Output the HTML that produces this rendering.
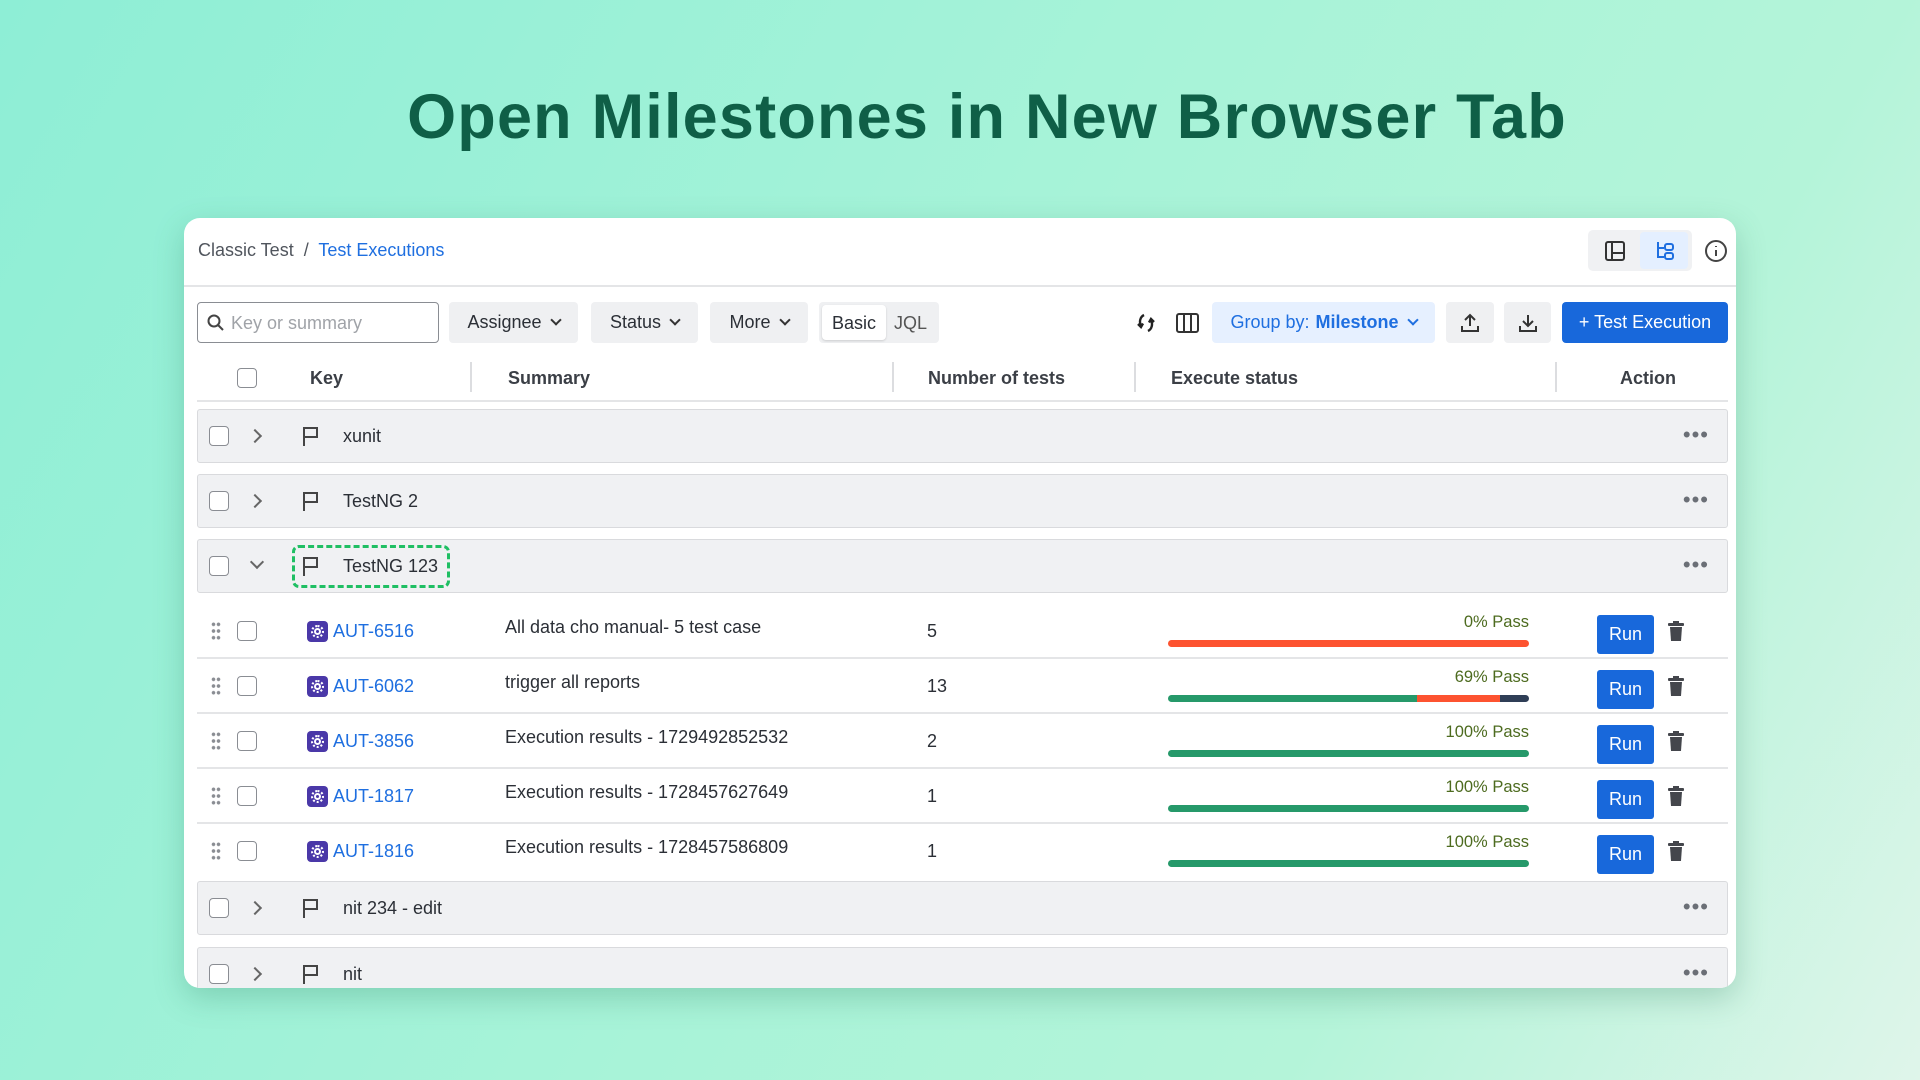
<!DOCTYPE html>
<html><head><meta charset="utf-8"><style>
*{box-sizing:border-box;margin:0;padding:0}
body{width:1920px;height:1080px;overflow:hidden;font-family:"Liberation Sans",sans-serif;background:linear-gradient(120deg,#8eeed6 0%,#a6f3d8 45%,#b4f4d9 75%,#dff5ea 100%);position:relative;color:#2b2f36}
h1{position:absolute;left:54px;right:0;top:81px;text-align:center;font-size:63px;font-weight:700;color:#0f5f47;letter-spacing:1.2px}
.card{position:absolute;left:184px;top:218px;width:1552px;height:770px;background:#fff;border-radius:16px;box-shadow:0 10px 30px rgba(30,110,80,.25);overflow:hidden}
.abs{position:absolute}
.bc{left:14px;top:22px;font-size:18px;color:#50555d}
.bc span{color:#1f6fe0}
.hdiv{left:0;right:0;top:67px;height:2px;background:#e4e5e7}
.btn{position:absolute;top:84px;height:41px;background:#eff0f2;border-radius:4px;font-size:18px;color:#2b2f36;display:flex;align-items:center;justify-content:center;gap:10px}
.chev{width:8px;height:8px;border-right:2px solid #333;border-bottom:2px solid #333;transform:rotate(45deg);margin-top:-5px}
.th{position:absolute;top:150px;font-size:18px;font-weight:700;color:#3b3f46}
.sep{position:absolute;top:144px;width:2px;height:30px;background:#dcdde0}
.cb{position:absolute;width:20px;height:20px;border:1.5px solid #8a8d93;border-radius:4px;background:#fff}
.grp{position:absolute;left:13px;width:1531px;height:54px;background:#f0f1f3;border:1px solid #d9dadd;border-radius:3px}
.grp .t{position:absolute;left:145px;top:16px;font-size:18px;color:#2b2f36}
.rchev{position:absolute;left:52px;top:21px;width:10px;height:10px;border-right:2px solid #666;border-bottom:2px solid #666;transform:rotate(-45deg)}
.dchev{position:absolute;left:54px;top:17px;width:10px;height:10px;border-right:2px solid #666;border-bottom:2px solid #666;transform:rotate(45deg)}
.dots{position:absolute;right:18px;top:12px;font-size:22px;color:#6b6f76;letter-spacing:1px}
.row{position:absolute;left:13px;width:1531px;height:55px;border-bottom:2px solid #e4e5e7}
.row .k{position:absolute;left:136px;top:17px;font-size:18px;color:#1f6fe0}
.row .s{position:absolute;left:308px;top:13px;font-size:18px;color:#2b2f36}
.row .n{position:absolute;left:730px;top:17px;font-size:18px}
.row .p{position:absolute;left:971px;width:361px;text-align:right;top:9px;font-size:16.5px;color:#4d6b1f}
.row .bar{position:absolute;left:971px;top:36px;width:361px;height:7px;border-radius:4px;overflow:hidden;display:flex}
.run{position:absolute;left:1400px;top:-7px;margin-top:18px;width:57px;height:39px;background:#1868db;color:#fff;border-radius:3px;font-size:18px;display:flex;align-items:center;justify-content:center}
.ico{position:absolute;left:110px;top:17px;width:21px;height:21px;background:#4a38a8;border-radius:4px}
.ico:before{content:"";position:absolute;left:4px;top:4px;width:13px;height:13px;border-radius:50%;border:2.5px dotted #fff;box-sizing:border-box}
.ico:after{content:"";position:absolute;left:7px;top:7px;width:7px;height:7px;border-radius:50%;border:2px solid #fff;box-sizing:border-box}
.drag{position:absolute;left:14px;top:17px;width:10px;height:20px;background:radial-gradient(circle,#8a8d93 1.6px,transparent 2px) 0 0/5px 6.7px}
.tr{position:absolute;left:1470px;top:16px}
</style></head><body>
<h1>Open Milestones in New Browser Tab</h1>
<div class="card">
<div class="abs bc">Classic Test &nbsp;/&nbsp; <span>Test Executions</span></div>
<div class="abs" style="left:1404px;top:12px;width:104px;height:41px;background:#f0f1f3;border-radius:5px"></div>
<div class="abs" style="left:1456px;top:14px;width:48px;height:37px;background:#e4efff;border-radius:4px"></div>
<svg class="abs" style="left:1420px;top:22px" width="22" height="22" viewBox="0 0 22 22" fill="none" stroke="#333" stroke-width="2"><rect x="2" y="2" width="18" height="18" rx="2"/><path d="M8 2v18M8 13h12"/></svg>
<svg class="abs" style="left:1470px;top:22px" width="22" height="22" viewBox="0 0 22 22" fill="none" stroke="#1f6fe0" stroke-width="2"><path d="M4 2v15h6M4 8h6"/><rect x="11" y="4" width="8" height="6" rx="2"/><rect x="11" y="13" width="8" height="6" rx="2"/></svg>
<svg class="abs" style="left:1520px;top:21px" width="24" height="24" viewBox="0 0 24 24" fill="none" stroke="#444" stroke-width="2"><circle cx="12" cy="12" r="10"/><path d="M12 11v6M12 7v1"/></svg>
<div class="abs hdiv"></div>
<div class="abs" style="left:13px;top:84px;width:242px;height:41px;border:1.5px solid #8a8d93;border-radius:4px;font-size:18px;color:#a0a3a8;padding:10px 0 0 33px">Key or summary</div>
<svg class="abs" style="left:23px;top:96px" width="18" height="18" viewBox="0 0 18 18" fill="none" stroke="#444" stroke-width="2"><circle cx="7" cy="7" r="5.5"/><path d="M11 11l5 5"/></svg>
<div class="btn" style="left:265px;width:129px">Assignee <i class="chev"></i></div>
<div class="btn" style="left:407px;width:107px">Status <i class="chev"></i></div>
<div class="btn" style="left:526px;width:98px">More <i class="chev"></i></div>
<div class="btn" style="left:635px;width:120px;background:#eff0f2"></div>
<div class="abs" style="left:638px;top:87px;width:64px;height:35px;background:#fff;border-radius:4px;box-shadow:0 1px 2px rgba(0,0,0,.15);font-size:18px;padding-top:8px;text-align:center">Basic</div>
<div class="abs" style="left:710px;top:95px;font-size:18px;color:#555">JQL</div>
<svg class="abs" style="left:950px;top:93px" width="24" height="24" viewBox="0 0 24 24" fill="none" stroke="#222" stroke-width="2.4"><path d="M10 4C6 6 5 11 7 15"/><path d="M4 13l3 3 2-3.5"/><path d="M14 20c4-2 5-7 3-11"/><path d="M20 11l-3-3-2 3.5"/></svg>
<svg class="abs" style="left:991px;top:93px" width="25" height="24" viewBox="0 0 25 24" fill="none" stroke="#333" stroke-width="2"><rect x="2" y="3" width="21" height="18" rx="2"/><path d="M9 3v18M16 3v18"/></svg>
<div class="btn" style="left:1028px;width:223px;background:#e6f0ff;color:#1f6fe0">Group by: <b style="font-weight:600;margin-left:-4px">Milestone</b> <i class="chev" style="border-color:#1f6fe0"></i></div>
<div class="btn" style="left:1262px;width:48px"><svg width="22" height="22" viewBox="0 0 22 22" fill="none" stroke="#333" stroke-width="2"><path d="M11 14V3M6 8l5-5 5 5M3 14v5h16v-5"/></svg></div>
<div class="btn" style="left:1320px;width:47px"><svg width="22" height="22" viewBox="0 0 22 22" fill="none" stroke="#333" stroke-width="2"><path d="M11 3v11M6 9l5 5 5-5M3 14v5h16v-5"/></svg></div>
<div class="btn" style="left:1378px;width:166px;background:#1868db;color:#fff">+ Test Execution</div>

<div class="cb" style="left:53px;top:150px"></div>
<div class="th" style="left:126px">Key</div>
<div class="sep" style="left:286px"></div>
<div class="th" style="left:324px">Summary</div>
<div class="sep" style="left:708px"></div>
<div class="th" style="left:744px">Number of tests</div>
<div class="sep" style="left:950px"></div>
<div class="th" style="left:987px">Execute status</div>
<div class="sep" style="left:1371px"></div>
<div class="th" style="left:1436px">Action</div>
<div class="abs" style="left:13px;right:8px;top:182px;height:2px;background:#e4e5e7"></div>

<div class="grp" style="top:191px"><div class="cb" style="left:11px;top:16px"></div><i class="rchev"></i><svg class="abs" style="left:104px;top:15px" width="18" height="22" viewBox="0 0 18 22" fill="none" stroke="#444" stroke-width="2"><path d="M2 21V3h13v9H2"/></svg><div class="t">xunit</div><div class="dots">•••</div></div>
<div class="grp" style="top:256px"><div class="cb" style="left:11px;top:16px"></div><i class="rchev"></i><svg class="abs" style="left:104px;top:15px" width="18" height="22" viewBox="0 0 18 22" fill="none" stroke="#444" stroke-width="2"><path d="M2 21V3h13v9H2"/></svg><div class="t">TestNG 2</div><div class="dots">•••</div></div>
<div class="grp" style="top:321px"><div class="cb" style="left:11px;top:16px"></div><i class="dchev"></i><div class="abs" style="left:94px;top:5px;width:158px;height:43px;border:3px dashed #1fbf63;border-radius:7px"></div><svg class="abs" style="left:104px;top:15px" width="18" height="22" viewBox="0 0 18 22" fill="none" stroke="#444" stroke-width="2"><path d="M2 21V3h13v9H2"/></svg><div class="t">TestNG 123</div><div class="dots">•••</div></div>

<div class="row" style="top:386px"><i class="drag"></i><div class="cb" style="left:40px;top:17px"></div><i class="ico"></i><div class="k">AUT-6516</div><div class="s">All data cho manual- 5 test case</div><div class="n">5</div><div class="p">0% Pass</div><div class="bar"><i style="flex:1;background:#fd5330"></i></div><div class="run">Run</div><svg class="tr" width="18" height="22" viewBox="0 0 18 22" fill="#44464c"><rect x="1" y="3" width="16" height="3" rx="1"/><rect x="6" y="1" width="6" height="3"/><path d="M3 7h12l-1 14H4z"/></svg></div>
<div class="row" style="top:441px"><i class="drag"></i><div class="cb" style="left:40px;top:17px"></div><i class="ico"></i><div class="k">AUT-6062</div><div class="s">trigger all reports</div><div class="n">13</div><div class="p">69% Pass</div><div class="bar"><i style="width:69%;background:#26996a"></i><i style="width:23%;background:#fd5330"></i><i style="flex:1;background:#2f3e56"></i></div><div class="run">Run</div><svg class="tr" width="18" height="22" viewBox="0 0 18 22" fill="#44464c"><rect x="1" y="3" width="16" height="3" rx="1"/><rect x="6" y="1" width="6" height="3"/><path d="M3 7h12l-1 14H4z"/></svg></div>
<div class="row" style="top:496px"><i class="drag"></i><div class="cb" style="left:40px;top:17px"></div><i class="ico"></i><div class="k">AUT-3856</div><div class="s">Execution results - 1729492852532</div><div class="n">2</div><div class="p">100% Pass</div><div class="bar"><i style="flex:1;background:#26996a"></i></div><div class="run">Run</div><svg class="tr" width="18" height="22" viewBox="0 0 18 22" fill="#44464c"><rect x="1" y="3" width="16" height="3" rx="1"/><rect x="6" y="1" width="6" height="3"/><path d="M3 7h12l-1 14H4z"/></svg></div>
<div class="row" style="top:551px"><i class="drag"></i><div class="cb" style="left:40px;top:17px"></div><i class="ico"></i><div class="k">AUT-1817</div><div class="s">Execution results - 1728457627649</div><div class="n">1</div><div class="p">100% Pass</div><div class="bar"><i style="flex:1;background:#26996a"></i></div><div class="run">Run</div><svg class="tr" width="18" height="22" viewBox="0 0 18 22" fill="#44464c"><rect x="1" y="3" width="16" height="3" rx="1"/><rect x="6" y="1" width="6" height="3"/><path d="M3 7h12l-1 14H4z"/></svg></div>
<div class="row" style="top:606px;border-bottom:none"><i class="drag"></i><div class="cb" style="left:40px;top:17px"></div><i class="ico"></i><div class="k">AUT-1816</div><div class="s">Execution results - 1728457586809</div><div class="n">1</div><div class="p">100% Pass</div><div class="bar"><i style="flex:1;background:#26996a"></i></div><div class="run">Run</div><svg class="tr" width="18" height="22" viewBox="0 0 18 22" fill="#44464c"><rect x="1" y="3" width="16" height="3" rx="1"/><rect x="6" y="1" width="6" height="3"/><path d="M3 7h12l-1 14H4z"/></svg></div>

<div class="grp" style="top:663px"><div class="cb" style="left:11px;top:16px"></div><i class="rchev"></i><svg class="abs" style="left:104px;top:15px" width="18" height="22" viewBox="0 0 18 22" fill="none" stroke="#444" stroke-width="2"><path d="M2 21V3h13v9H2"/></svg><div class="t">nit 234 - edit</div><div class="dots">•••</div></div>
<div class="grp" style="top:729px"><div class="cb" style="left:11px;top:16px"></div><i class="rchev"></i><svg class="abs" style="left:104px;top:15px" width="18" height="22" viewBox="0 0 18 22" fill="none" stroke="#444" stroke-width="2"><path d="M2 21V3h13v9H2"/></svg><div class="t">nit</div><div class="dots">•••</div></div>
</div>
</body></html>
